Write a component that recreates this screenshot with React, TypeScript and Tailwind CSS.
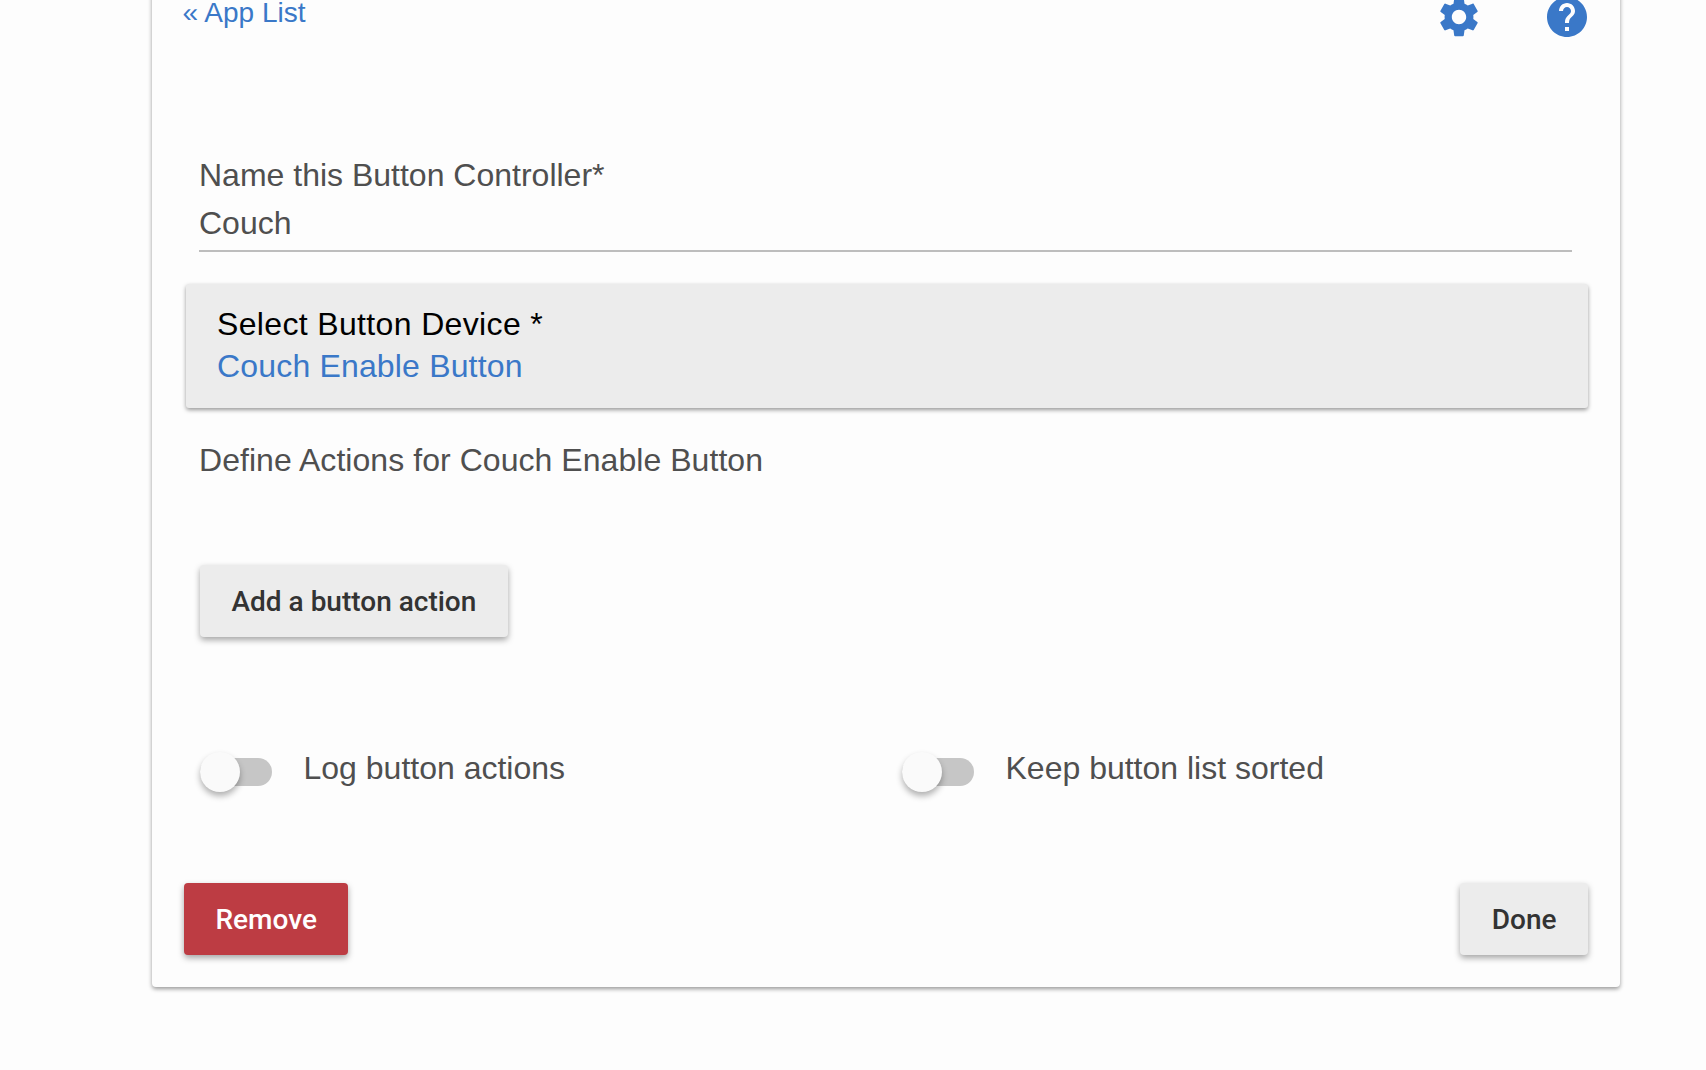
// Button controller settings page
function Toggle({ label }: { label: string }) {
  return (
    <div className="flex items-start">
      <div className="relative w-[72px] h-10 flex-shrink-0">
        <div className="mt-[6px] h-7 rounded-full bg-[#c6c6c6]" />
        <div className="absolute left-0 top-0 w-10 h-10 rounded-full bg-[#fafafa] shadow-[0_4px_6px_rgba(0,0,0,0.3)]" />
      </div>
      <span className="ml-[31.5px] -mt-1 text-[32px] leading-10 text-[#4f4f4f]">{label}</span>
    </div>
  );
}

function RaisedButton({ label, className }: { label: string; className: string }) {
  return (
    <button
      className={`h-[72px] pt-px px-[31.5px] rounded-[4px] font-['Roboto',sans-serif] font-medium text-[28px] shadow-[0_3px_6px_rgba(0,0,0,0.35)] ${className}`}
    >
      {label}
    </button>
  );
}

export default function App() {
  return (
    <div className="h-[1070px] overflow-hidden bg-[#fdfdfd] font-['Liberation_Sans',sans-serif]">
      <div className="ml-[152px] w-[1468px] h-[1027px] -mt-10 rounded-[4px] bg-[#fdfdfd] shadow-[0_2px_4px_rgba(0,0,0,0.4)]">
        {/* Header */}
        <div className="flex justify-between pl-[30.5px] pr-[29px] pt-[33px]">
          <a className="text-[28px] leading-10 text-[#3a78c8]">« App List</a>
          <div className="flex gap-[60px] text-[#3a78c8]">
            <svg width="48" height="48" viewBox="0 0 24 24" fill="currentColor">
              <path d="M19.14 12.94c.04-.3.06-.61.06-.94 0-.32-.02-.64-.07-.94l2.03-1.58c.18-.14.23-.41.12-.61l-1.92-3.32c-.12-.22-.37-.29-.59-.22l-2.39.96c-.5-.38-1.03-.7-1.62-.94l-.36-2.54c-.04-.24-.24-.41-.48-.41h-3.84c-.24 0-.43.17-.47.41l-.36 2.54c-.59.24-1.13.57-1.62.94l-2.39-.96c-.22-.08-.47 0-.59.22L2.74 8.87c-.12.21-.08.47.12.61l2.03 1.58c-.05.3-.09.63-.09.94s.02.64.07.94l-2.03 1.58c-.18.14-.23.41-.12.61l1.92 3.32c.12.22.37.29.59.22l2.39-.96c.5.38 1.03.7 1.62.94l.36 2.54c.05.24.24.41.48.41h3.84c.24 0 .44-.17.47-.41l.36-2.54c.59-.24 1.13-.56 1.62-.94l2.39.96c.22.08.47 0 .59-.22l1.92-3.32c.12-.22.07-.47-.12-.61l-2.01-1.58zM12 15.6c-1.98 0-3.6-1.62-3.6-3.6s1.62-3.6 3.6-3.6 3.6 1.62 3.6 3.6-1.62 3.6-3.6 3.6z" />
            </svg>
            <svg width="48" height="48" viewBox="0 0 24 24" fill="currentColor">
              <path d="M12 2C6.48 2 2 6.48 2 12s4.48 10 10 10 10-4.48 10-10S17.52 2 12 2zm1 17h-2v-2h2v2zm2.07-7.75l-.9.92C13.45 12.9 13 13.5 13 15h-2v-.5c0-1.1.45-2.1 1.17-2.83l1.24-1.26c.37-.36.59-.86.59-1.41 0-1.1-.9-2-2-2s-2 .9-2 2H8c0-2.21 1.79-4 4-4s4 1.79 4 4c0 .88-.36 1.68-.93 2.25z" />
            </svg>
          </div>
        </div>

        <div className="pl-8 pr-[32px]">
          {/* Name field */}
          <div className="mt-[114px] pl-[15px] pr-4 text-[32px] leading-10 text-[#4f4f4f]">
            <div>Name this Button Controller*</div>
            <div className="mt-2 pb-[7px] border-b-2 border-[#bdbdbd]">Couch</div>
          </div>

          {/* Device picker */}
          <div className="mt-8 ml-[2px] pl-[31px] pt-[19px] pb-5 rounded-[3px] bg-[#ececec] text-[32px] leading-[43px] shadow-[0_2px_4px_rgba(0,0,0,0.4)]">
            <div className="text-black tracking-[0.35px]">Select Button Device *</div>
            <div className="-mt-px text-[#3a78c8] tracking-[0.17px]">Couch Enable Button</div>
          </div>

          <div className="mt-8 pl-[15px] text-[32px] leading-10 tracking-[0.05px] text-[#4f4f4f]">
            Define Actions for Couch Enable Button
          </div>

          <div className="mt-[85px] pl-4">
            <RaisedButton label="Add a button action" className="bg-[#ececec] text-[#333333]" />
          </div>

          {/* Toggles */}
          <div className="mt-[115px] pl-4 grid grid-cols-[702px_1fr]">
            <Toggle label="Log button actions" />
            <Toggle label="Keep button list sorted" />
          </div>

          {/* Footer buttons */}
          <div className="mt-[91px] flex justify-between">
            <RaisedButton label="Remove" className="bg-[#bd3c43] text-white" />
            <RaisedButton label="Done" className="bg-[#ececec] text-[#333333]" />
          </div>
        </div>
      </div>
    </div>
  );
}
